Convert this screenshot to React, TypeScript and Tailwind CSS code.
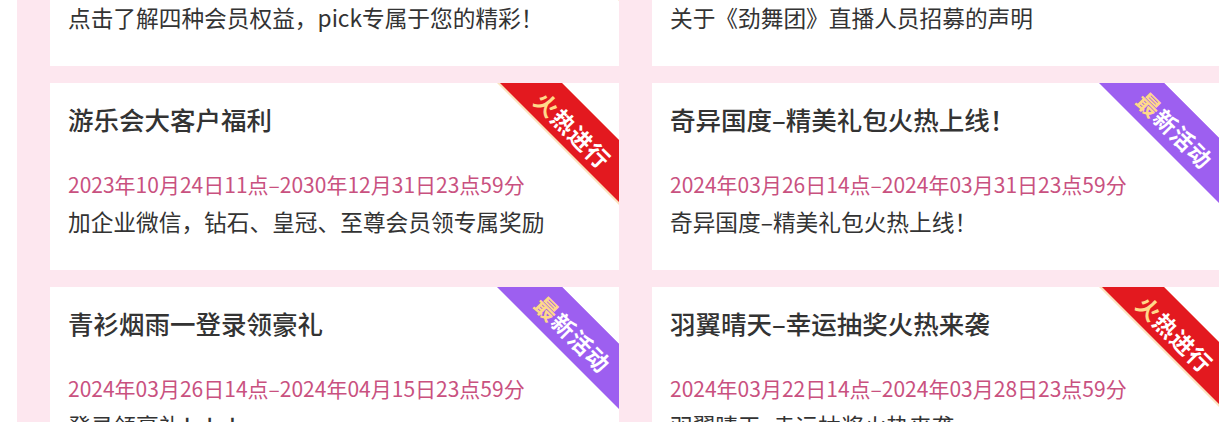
import React from 'react'

type Tag = 'hot' | 'new' | null

type Activity = {
  title: string
  time:  string
  desc:  string
  tag:   Tag
}

const ACTIVITIES: Activity[] = [
  { title: '会员权益介绍',            time: '2023年10月24日11点–2030年12月31日23点59分', desc: '点击了解四种会员权益，pick专属于您的精彩！', tag: 'hot' },
  { title: '《劲舞团》直播人员招募',  time: '2024年03月20日10点–2024年12月31日23点59分', desc: '关于《劲舞团》直播人员招募的声明',           tag: null },
  { title: '游乐会大客户福利',        time: '2023年10月24日11点–2030年12月31日23点59分', desc: '加企业微信，钻石、皇冠、至尊会员领专属奖励', tag: 'hot' },
  { title: '奇异国度–精美礼包火热上线！', time: '2024年03月26日14点–2024年03月31日23点59分', desc: '奇异国度–精美礼包火热上线！',             tag: 'new' },
  { title: '青衫烟雨一登录领豪礼',    time: '2024年03月26日14点–2024年04月15日23点59分', desc: '登录领豪礼！！！',                           tag: 'new' },
  { title: '羽翼晴天–幸运抽奖火热来袭', time: '2024年03月22日14点–2024年03月28日23点59分', desc: '羽翼晴天–幸运抽奖火热来袭',               tag: 'hot' },
]

function Ribbon({ tag }: { tag: Exclude<Tag, null> }) {
  const hot   = tag === 'hot'
  const label = hot ? '火热进行' : '最新活动'
  return (
    <div className="absolute top-0 right-0 w-[122px] h-[122px] pointer-events-none">
      <div
        className={`absolute inset-0 [clip-path:polygon(0_0,65px_0,100%_57px,100%_100%)] ${hot ? 'bg-[#fbe3bf]' : 'bg-[#9d5ff0]'}`}
      />
      <div
        className={`absolute inset-0 [clip-path:polygon(3px_0,65px_0,100%_57px,100%_calc(100%-3px))] ${hot ? 'bg-[#e3191f]' : 'bg-[#9d5ff0]'}`}
      />
      <div className="absolute left-[76px] top-[47px] -translate-x-1/2 -translate-y-1/2 rotate-45 whitespace-nowrap text-[23px] leading-none font-bold tracking-[1px] text-white">
        <span className="text-[#ffd98a]">{label[0]}</span>
        {label.slice(1)}
      </div>
    </div>
  )
}

function ActivityCard({ item }: { item: Activity }) {
  return (
    <div className="relative h-[187px] bg-white px-[18px] pt-[18px] overflow-hidden">
      <div className="text-[25.5px] leading-[36px] font-medium text-[#333]">{item.title}</div>
      <div className="mt-[31px] text-[21px] leading-[32px] text-[#c9517f]">{item.time}</div>
      <div className="mt-[6px] text-[22.7px] leading-[32px] text-[#333]">{item.desc}</div>
      {item.tag && <Ribbon tag={item.tag} />}
    </div>
  )
}

export default function App() {
  return (
    <div className="w-full h-[422px] overflow-hidden bg-white pl-[17px] font-['Noto_Sans_CJK_SC',sans-serif]">
      <div className="h-full bg-[#fde7ef] pl-[33px] overflow-hidden">
        <div className="-mt-[121px] grid grid-cols-[569px_569px] gap-x-[33px] gap-y-[17px] w-[1171px]">
          {ACTIVITIES.map((a, i) => (
            <ActivityCard key={i} item={a} />
          ))}
        </div>
      </div>
    </div>
  )
}
